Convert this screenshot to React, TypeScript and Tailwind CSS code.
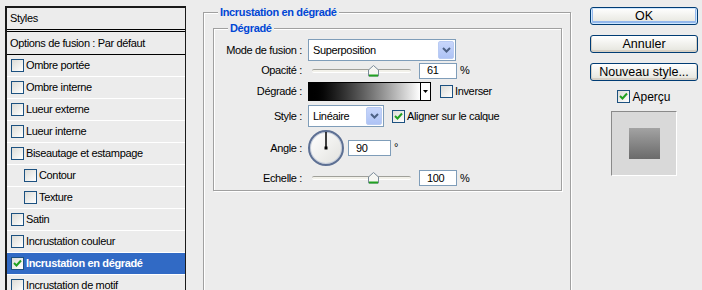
import React from 'react';

const font = { fontFamily: '"Liberation Sans", Arial, sans-serif' };

function CheckBox({ checked = false }: { checked?: boolean }) {
  return (
    <span className="w-[13px] h-[13px] shrink-0 border border-[#1c5180] bg-gradient-to-br from-[#dcdcd7] to-white flex items-center justify-center">
      {checked && (
        <svg width="9" height="9" viewBox="0 0 9 9">
          <path d="M1 4 L3.5 6.5 L8 1.5" stroke="#21a121" strokeWidth="2" fill="none" />
        </svg>
      )}
    </span>
  );
}

function Chevron() {
  return (
    <span className="absolute right-[1px] top-[1px] bottom-[1px] w-[16px] rounded-[2px] bg-gradient-to-b from-[#c8d6fb] to-[#aec3f5] border border-[#b9cbf3] flex items-center justify-center">
      <svg width="9" height="6" viewBox="0 0 9 6">
        <path d="M1 1 L4.5 4.5 L8 1" stroke="#4d6185" strokeWidth="2" fill="none" />
      </svg>
    </span>
  );
}

function Slider({ pos }: { pos: number }) {
  return (
    <div className="relative w-[103px] h-[12px] flex items-center pl-[4px]">
      <div className="w-[99px] h-[4px] rounded-[2px] border-t border-[#a0a09a] border-b border-b-white bg-[#f2f1ea]" />
      <svg className="absolute top-0" style={{ left: pos }} width="11" height="12" viewBox="0 0 11 12">
        <path d="M5.5 0.5 L10.5 5 L10.5 11 L0.5 11 L0.5 5 Z" fill="#f6f6f2" stroke="#7a8a99" />
        <rect x="1" y="9.5" width="9" height="2" fill="#21a121" />
      </svg>
    </div>
  );
}

function NumBox({ value, w = 'w-[38px]' }: { value: string; w?: string }) {
  return (
    <div className={`${w} h-[16px] border border-[#7f9db9] bg-white pl-[7px] flex items-center text-[11px]`}>
      {value}
    </div>
  );
}

function Button({ label, def = false }: { label: string; def?: boolean }) {
  return (
    <div
      className={`h-[18px] w-[108px] rounded-[3px] border border-[#003c74] bg-gradient-to-b from-white to-[#e4e4dc] flex items-center justify-center text-[12.5px] text-black ${
        def ? 'shadow-[inset_0_0_0_1px_#cee7ff,inset_0_-1px_0_2px_#94b8ec]' : 'shadow-[inset_0_-1px_0_1px_#d6d0c5]'
      }`}
    >
      {label}
    </div>
  );
}

const rows: { label: string; indent?: boolean; selected?: boolean }[] = [
  { label: 'Ombre portée' },
  { label: 'Ombre interne' },
  { label: 'Lueur externe' },
  { label: 'Lueur interne' },
  { label: 'Biseautage et estampage' },
  { label: 'Contour', indent: true },
  { label: 'Texture', indent: true },
  { label: 'Satin' },
  { label: 'Incrustation couleur' },
  { label: 'Incrustation en dégradé', selected: true },
  { label: 'Incrustation de motif' },
];

export default function App() {
  return (
    <div
      className="w-[702px] h-[290px] overflow-hidden bg-[#ececec] flex text-[11px] tracking-[-0.35px] text-black"
      style={font}
    >
      {/* left list */}
      <div className="ml-[5px] mt-[6px] w-[181px] h-[300px] shrink-0 border-l-2 border-t-2 border-r border-[#1a1a1a]">
        <div className="h-[24px] pl-[3px] flex items-center border-b-[3px] border-double border-black">Styles</div>
        <div className="h-[23px] pl-[3px] flex items-center border-b border-black">Options de fusion : Par défaut</div>
        {rows.map((r) => (
          <div
            key={r.label}
            className={`h-[22px] flex items-center gap-[2px] border-b border-white ${r.indent ? 'pl-[17px]' : 'pl-[4px]'} ${
              r.selected ? 'bg-[#316ac5] text-white font-bold' : ''
            }`}
          >
            <CheckBox checked={r.selected} />
            <span>{r.label}</span>
          </div>
        ))}
      </div>

      {/* middle */}
      <div className="ml-[17px] mt-[12px] w-[368px] h-[300px] shrink-0 border border-[#a0a0a0] shadow-[1px_1px_0_#fff,inset_1px_1px_0_#fff]">
        <div className="-mt-[7px] ml-[14px] w-fit px-[2px] h-[13px] leading-[13px] bg-[#ececec] font-bold text-[#0046d5]">
          Incrustation en dégradé
        </div>
        <div className="mt-[9px] ml-[9px] w-[349px] h-[163px] border border-[#a0a0a0] shadow-[1px_1px_0_#fff,inset_1px_1px_0_#fff]">
          <div className="-mt-[7px] ml-[14px] w-fit px-[2px] h-[13px] leading-[13px] bg-[#ececec] font-bold text-[#0046d5]">
            Dégradé
          </div>

          <div className="mt-[4px] h-[22px] flex items-center">
            <div className="w-[88px] text-right">Mode de fusion :</div>
            <div className="ml-[6px] relative w-[148px] h-[22px] border border-[#7f9db9] bg-white flex items-center pl-[4px]">
              Superposition
              <Chevron />
            </div>
          </div>

          <div className="h-[19px] flex items-center">
            <div className="w-[88px] text-right">Opacité :</div>
            <div className="ml-[6px]">
              <Slider pos={60} />
            </div>
            <div className="ml-[8px]">
              <NumBox value="61" />
            </div>
            <span className="ml-[3px]">%</span>
          </div>

          <div className="h-[23px] flex items-center">
            <div className="w-[88px] text-right">Dégradé :</div>
            <div className="ml-[6px] w-[123px] h-[19px] border border-black flex">
              <div className="flex-1 bg-gradient-to-r from-black to-white" />
              <div className="w-[10px] border-l border-black bg-white flex items-center justify-center">
                <svg width="5" height="3" viewBox="0 0 5 3">
                  <path d="M0 0 L5 0 L2.5 3 Z" fill="#000" />
                </svg>
              </div>
            </div>
            <div className="ml-[9px] flex items-center gap-[2px]">
              <CheckBox />
              <span>Inverser</span>
            </div>
          </div>

          <div className="h-[26px] flex items-center">
            <div className="w-[88px] text-right">Style :</div>
            <div className="ml-[6px] relative w-[76px] h-[22px] border border-[#7f9db9] bg-white flex items-center pl-[4px]">
              Linéaire
              <Chevron />
            </div>
            <div className="ml-[8px] flex items-center gap-[2px]">
              <CheckBox checked />
              <span>Aligner sur le calque</span>
            </div>
          </div>

          <div className="h-[38px] flex items-center">
            <div className="w-[88px] text-right">Angle :</div>
            <div className="ml-[6px] relative w-[36px] h-[36px] rounded-full border-2 border-[#5d7094] bg-gradient-to-br from-white to-[#e2e2de] shadow-[inset_0_0_0_1px_#c8cfdc]">
              <svg className="absolute inset-0" width="32" height="32" viewBox="0 0 32 32">
                <line x1="16" y1="16" x2="16" y2="0" stroke="#000" strokeWidth="1.5" />
                <rect x="14.5" y="14.5" width="3" height="3" fill="#000" />
              </svg>
            </div>
            <div className="ml-[4px]">
              <NumBox value="90" w="w-[43px]" />
            </div>
            <span className="ml-[3px] self-start mt-[10px]">°</span>
          </div>

          <div className="h-[22px] flex items-center">
            <div className="w-[88px] text-right">Echelle :</div>
            <div className="ml-[6px]">
              <Slider pos={60} />
            </div>
            <div className="ml-[8px]">
              <NumBox value="100" />
            </div>
            <span className="ml-[3px]">%</span>
          </div>
        </div>
      </div>

      {/* right */}
      <div className="ml-[19px] mt-[7px] w-[108px] shrink-0 flex flex-col items-center tracking-normal">
        <Button label="OK" def />
        <div className="mt-[10px]">
          <Button label="Annuler" />
        </div>
        <div className="mt-[10px]">
          <Button label="Nouveau style..." />
        </div>
        <div className="mt-[9px] flex items-center gap-[2px] text-[12px] h-[13px]">
          <CheckBox checked />
          <span>Aperçu</span>
        </div>
        <div className="mt-[8px] w-[66px] h-[65px] border-l border-t border-[#8a8a8a] border-r border-b border-r-white border-b-white bg-[#d9d9d9] flex items-center justify-center">
          <div className="w-[31px] h-[31px] bg-gradient-to-b from-[#a3a3a3] to-[#6b6b6b]" />
        </div>
      </div>
    </div>
  );
}
